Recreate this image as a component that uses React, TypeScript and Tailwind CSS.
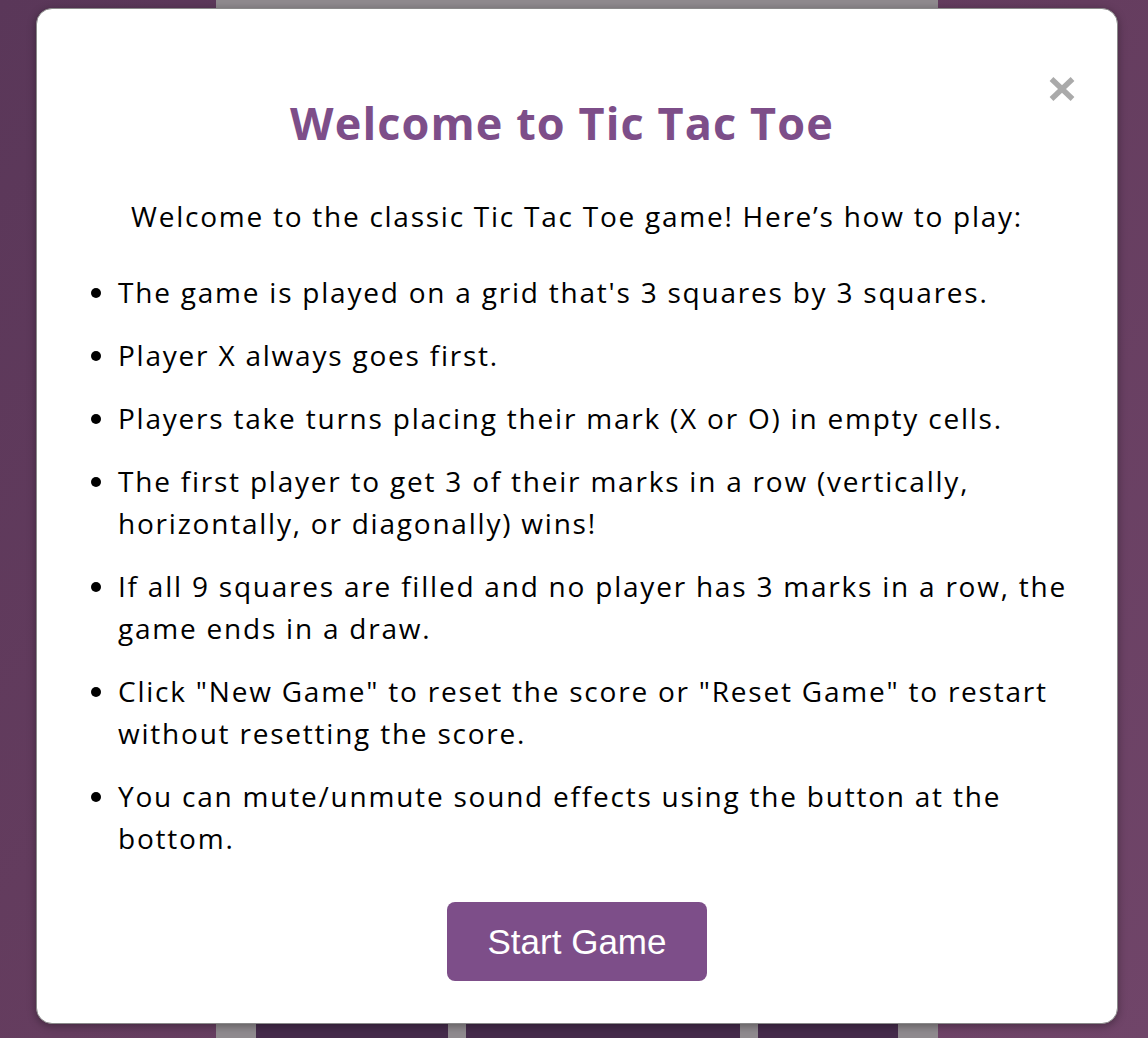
import React from "react";

const rules = [
  "The game is played on a grid that's 3 squares by 3 squares.",
  "Player X always goes first.",
  "Players take turns placing their mark (X or O) in empty cells.",
  "The first player to get 3 of their marks in a row (vertically, horizontally, or diagonally) wins!",
  "If all 9 squares are filled and no player has 3 marks in a row, the game ends in a draw.",
  'Click "New Game" to reset the score or "Reset Game" to restart without resetting the score.',
  "You can mute/unmute sound effects using the button at the bottom.",
];

function CloseIcon() {
  return (
    <svg width="26" height="24" viewBox="0 0 26 24" aria-hidden="true">
      <line x1="2.5" y1="2" x2="23.5" y2="22" stroke="#aaaaaa" strokeWidth="5.5" />
      <line x1="23.5" y1="2" x2="2.5" y2="22" stroke="#aaaaaa" strokeWidth="5.5" />
    </svg>
  );
}

function Board() {
  // the game board sits behind the dialog; only its edges show
  return (
    <div className="ml-[216px] w-[722px] h-full bg-[#8f8a8e] flex flex-col justify-end">
      <div className="flex gap-[18px] px-[40px] h-[40px]">
        <div className="w-[192px] bg-[#452b4b] rounded-t-[6px]" />
        <div className="w-[274px] bg-[#452b4b] rounded-t-[6px]" />
        <div className="w-[140px] bg-[#452b4b] rounded-t-[6px]" />
      </div>
    </div>
  );
}

export default function App() {
  return (
    <div className="relative w-full h-[1038px] overflow-hidden bg-[linear-gradient(135deg,#5a3759_0%,#653d5f_50%,#704569_100%)]">
      <Board />

      <div className="absolute inset-0 flex items-start pl-[36px] pt-[8px]">
        <div
          className="relative w-[1082px] bg-white border border-[#8a8a8a] rounded-[16px] shadow-[0_2px_8px_rgba(0,0,0,0.35)] pt-[83px] pb-[42px] px-[40px] text-black"
          style={{ fontFamily: '"Open Sans", "Noto Sans", sans-serif' }}
        >
          <button className="absolute right-[42px] top-[68px] p-0 leading-none">
            <CloseIcon />
          </button>

          <h2 className="text-center pr-[30px] text-[45px] leading-[61px] font-bold tracking-[1.1px] text-[#7d4e89] mb-[42px]">
            Welcome to Tic Tac Toe
          </h2>

          <p className="text-center text-[28px] leading-[42px] tracking-[1.75px] mb-[34px]">
            Welcome to the classic Tic Tac Toe game! Here’s how to play:
          </p>

          <ul className="list-disc pl-[41px] text-[28px] leading-[42px] tracking-[1.78px]">
            {rules.map((r, i) => (
              <li key={i} className={i < rules.length - 1 ? "mb-[21px]" : ""}>
                {r}
              </li>
            ))}
          </ul>

          <div className="flex justify-center mt-[43px]">
            <button
              className="bg-[#7d4e89] text-white rounded-[8px] w-[260px] h-[79px] text-[35px] leading-[40px]"
              style={{ fontFamily: '"Liberation Sans", Arial, sans-serif' }}
            >
              Start Game
            </button>
          </div>
        </div>
      </div>
    </div>
  );
}
